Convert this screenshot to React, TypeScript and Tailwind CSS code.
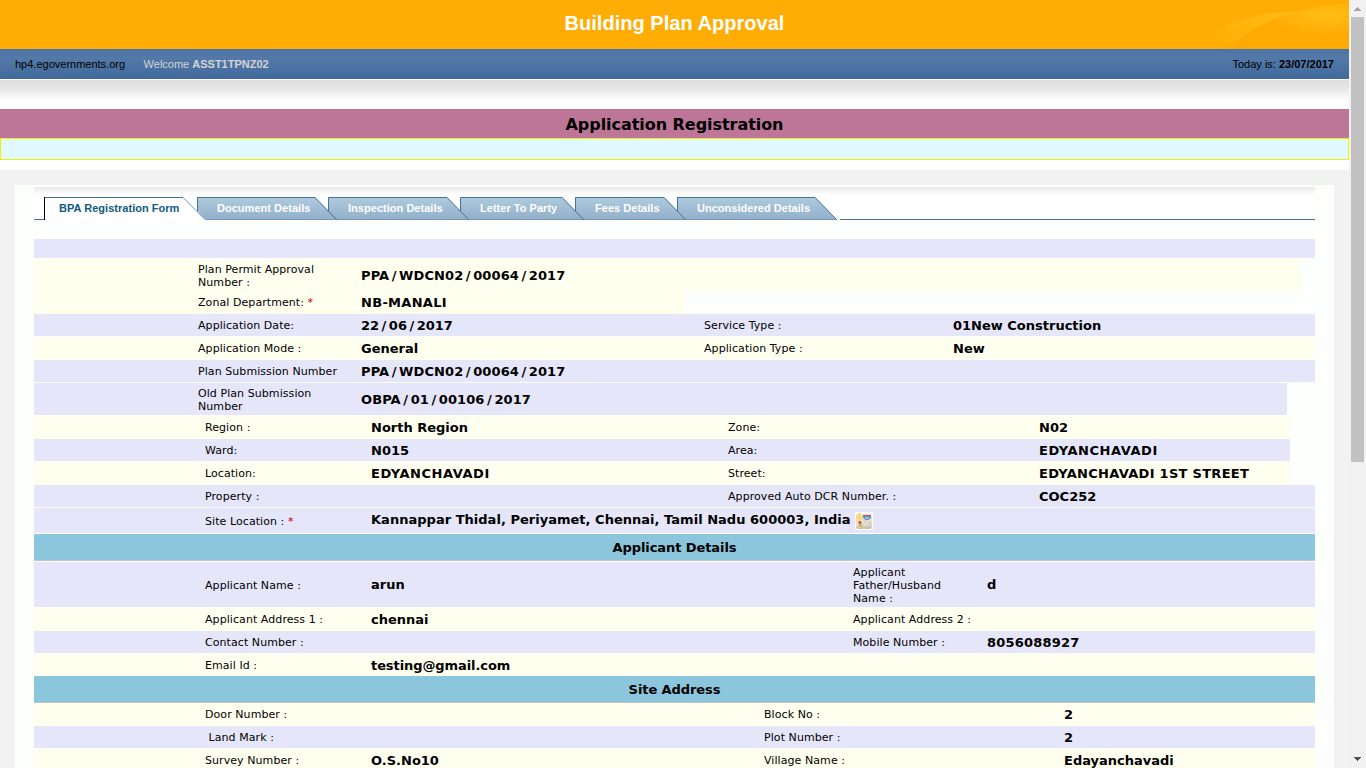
import React from "react";

type Row = {
  h: string;
  bg: string;
  cols: string;
  w?: string;
  cells: [string, string, string?, string?];
  required?: boolean;
  map?: boolean;
  nudge?: string;
  labelPad?: string;
  track?: string;
  track2?: string;
};

const LAV = "bg-[#e6e6fa] border-[#fcfffc]";
const IVORY = "bg-[#fffff0] border-[#fffff0]";
const A = "grid-cols-[164px_163px_343px_249px_1fr]";
const B = "grid-cols-[171px_166px_357px_311px_1fr]";
const C = "grid-cols-[171px_166px_482px_134px_1fr]";
const D = "grid-cols-[171px_166px_393px_300px_1fr]";

const planRows: Row[] = [
  { h: "h-[33px]", bg: IVORY, cols: A, w: "w-[1267px]", cells: ["Plan Permit Approval\nNumber :", "PPA/WDCN02/00064/2017"], nudge: "pt-[2px]", labelPad: "pt-[2px]", track: "tracking-[0.1px]" },
  { h: "h-[23px]", bg: IVORY, cols: A, w: "w-[651px]", cells: ["Zonal Department:", "NB-MANALI"], required: true, track: "tracking-[0.3px]" },
  { h: "h-[23px]", bg: LAV, cols: A, cells: ["Application Date:", "22/06/2017", "Service Type :", "01New Construction"] },
  { h: "h-[23px]", bg: IVORY, cols: A, cells: ["Application Mode :", "General", "Application Type :", "New"] },
  { h: "h-[23px]", bg: LAV, cols: A, cells: ["Plan Submission Number", "PPA/WDCN02/00064/2017"], track: "tracking-[0.1px]" },
  { h: "h-[33px]", bg: LAV, cols: A, w: "w-[1253px]", cells: ["Old Plan Submission\nNumber", "OBPA/01/00106/2017"], labelPad: "pt-[2px]", track: "tracking-[0.1px]" },
  { h: "h-[23px]", bg: IVORY, cols: B, w: "w-[1256px]", cells: ["Region :", "North Region", "Zone:", "N02"] },
  { h: "h-[23px]", bg: LAV, cols: B, w: "w-[1256px]", cells: ["Ward:", "N015", "Area:", "EDYANCHAVADI"], track2: "tracking-[0.54px]" },
  { h: "h-[23px]", bg: IVORY, cols: B, w: "w-[1256px]", cells: ["Location:", "EDYANCHAVADI", "Street:", "EDYANCHAVADI 1ST STREET"], track: "tracking-[0.54px]", track2: "tracking-[0.29px]" },
  { h: "h-[23px]", bg: LAV, cols: B, cells: ["Property :", "", "Approved Auto DCR Number. :", "COC252"] },
  { h: "h-[26px]", bg: LAV, cols: B, cells: ["Site Location :", "Kannappar Thidal, Periyamet, Chennai, Tamil Nadu 600003, India"], required: true, map: true, labelPad: "pt-px", track: "tracking-[0.02px]" },
];

const applicantRows: Row[] = [
  { h: "h-[46px]", bg: LAV, cols: C, cells: ["Applicant Name :", "arun", "Applicant\nFather/Husband\nName :", "d"], labelPad: "pt-[2px]" },
  { h: "h-[23px]", bg: IVORY, cols: C, cells: ["Applicant Address 1 :", "chennai", "Applicant Address 2 :", ""] },
  { h: "h-[23px]", bg: LAV, cols: C, cells: ["Contact Number :", "", "Mobile Number :", "8056088927"], track2: "tracking-[0.2px]" },
  { h: "h-[22px]", bg: IVORY, cols: C, cells: ["Email Id :", "testing@gmail.com"], nudge: "pt-px", track: "tracking-[-0.08px]" },
];

const siteRows: Row[] = [
  { h: "h-[23px]", bg: IVORY, cols: D, cells: ["Door Number :", "", "Block No :", "2"] },
  { h: "h-[23px]", bg: LAV, cols: D, cells: ["\u00a0Land Mark :", "", "Plot Number :", "2"] },
  { h: "h-[23px]", bg: IVORY, cols: D, cells: ["Survey Number :", "O.S.No10", "Village Name :", "Edayanchavadi"] },
];

function MapIcon() {
  return (
    <svg width="18" height="18" viewBox="0 0 18 18" className="ml-1 shrink-0">
      <rect width="18" height="18" fill="#fbfaf2" />
      <path d="M1 2h15l1 12-1 3H2l-1-3z" fill="#e6e2d3" />
      <path d="M1 14l1 3h14l1-3z" fill="#c9c4b2" />
      <path d="M9 8l7-1 1 7-9 1z" fill="#d9d5c5" />
      <path d="M4.5 1v15" stroke="#f6d95c" strokeWidth="2" />
      <path d="M1 5.5h16" stroke="#f6d95c" strokeWidth="2" />
      <path d="M9 14l5-6" stroke="#f7f5ec" />
      <path d="M8 3h8v2q-1 3-4 3t-4-3z" fill="#6487c8" />
      <path d="M8 3.5h8" stroke="#c8586c" />
      <path d="M10 6h4" stroke="#dbe4f5" />
      <circle cx="5" cy="10.5" r="1.5" fill="#d94438" />
      <path d="M5 12v3" stroke="#c9763d" />
      <path d="M6 13h2" stroke="#86b867" />
    </svg>
  );
}

function Label({ text, required, pad = "" }: { text?: string; required?: boolean; pad?: string }) {
  return (
    <div className={`whitespace-pre text-[11px] leading-[13px] tracking-[0.07px] ${pad}`}>
      {text}
      {required && <span className="text-[#c00000]"> *</span>}
    </div>
  );
}

function Value({ text = "", map, track = "" }: { text?: string; map?: boolean; track?: string }) {
  return (
    <div className={`flex items-center whitespace-pre text-[13px] font-bold leading-[15px] ${track}`}>
      <span className={map ? "pb-[2px]" : ""}>
        {text.split("/").map((part, i) => (
          <React.Fragment key={i}>
            {i > 0 && <span className="mx-[2.5px]">/</span>}
            {part}
          </React.Fragment>
        ))}
      </span>
      {map && <MapIcon />}
    </div>
  );
}

function DataRow({ row }: { row: Row }) {
  return (
    <div className={`grid shrink-0 items-center border-b ${row.h} ${row.bg} ${row.cols} ${row.w ?? "w-full"} ${row.nudge ?? ""}`}>
      <span />
      <Label text={row.cells[0]} required={row.required} pad={row.labelPad} />
      <Value text={row.cells[1]} map={row.map} track={row.track} />
      <Label text={row.cells[2]} pad={row.labelPad} />
      <Value text={row.cells[3]} track={row.track2} />
    </div>
  );
}

function SectionTitle({ children }: { children: React.ReactNode }) {
  return (
    <div className="flex h-[27px] items-center justify-center border-b border-[#c3c3c3] bg-[#8cc6dc] pt-[2px] text-[13px] font-bold tracking-[-0.08px]">
      {children}
    </div>
  );
}

const tabs = [
  { label: "Document Details", w: 140, step: "w-[131px] z-50" },
  { label: "Inspection Details", w: 141, step: "w-[132px] z-40" },
  { label: "Letter To Party", w: 124, step: "w-[115px] z-30" },
  { label: "Fees Details", w: 111, step: "w-[102px] z-20" },
  { label: "Unconsidered Details", w: 160, step: "w-[163px] z-10" },
];

function Tabs() {
  return (
    <div className="isolate flex h-[33px] items-end bg-linear-to-b from-[#ebebeb] to-white to-25% font-['Liberation_Sans',Arial,sans-serif] text-[11px] font-bold">
      <div className="h-[1px] w-[10px] bg-[#41719c]" />
      <div className="relative z-[60] flex h-[23px] w-[153px] items-center pl-[15px] tracking-[0.03px] text-[#0f5b80]">
        <svg className="absolute left-0 top-0 overflow-visible" width="162" height="23">
          <path d="M0.5 23V0.5H139L161.5 23H1" fill="#fff" />
          <path d="M0 0.5H139" stroke="#41719c" />
          <path d="M139 0.5L161.5 23" stroke="#6c98b6" fill="none" />
          <path d="M0.5 0V23" stroke="#000" />
        </svg>
        <span className="relative whitespace-nowrap">BPA Registration Form</span>
      </div>
      {tabs.map((t, i) => (
        <div key={t.label} className={`relative flex h-[23px] items-center pl-[20px] tracking-[0.03px] text-white ${t.step}`}>
          <svg className="absolute left-0 top-0 overflow-visible" width={t.w} height="23">
            <defs>
              <linearGradient id={`tab${i}`} x2="0" y2="1">
                <stop offset="0" stopColor="#afcbdd" />
                <stop offset="1" stopColor="#92afca" />
              </linearGradient>
            </defs>
            <path d={`M0 0H${t.w - 22}L${t.w} 23H9L0 14Z`} fill={`url(#tab${i})`} />
            <path d={`M9 22.5H${t.w}`} stroke="#7898b3" />
            <path d={`M0.5 14V0.5H${t.w - 22}L${t.w} 23`} fill="none" stroke="#41719c" />
          </svg>
          <span className="relative whitespace-nowrap">{t.label}</span>
        </div>
      ))}
      <div className="h-[1px] flex-1 bg-[#41719c]" />
    </div>
  );
}

function ScrollBar() {
  return (
    <div className="flex h-full w-[17px] flex-col items-center bg-[#f1f1f1]">
      <svg width="17" height="17" shapeRendering="crispEdges" className="shrink-0">
        <path d="M5 11h7v-1h-1v-1h-1v-1h-1v-1h-1v1h-1v1h-1v1h-1z" fill="#a3a3a3" />
      </svg>
      <div className="h-[445px] w-[13px] shrink-0 bg-[#c1c1c1]" />
      <div className="flex-1" />
      <svg width="17" height="17" shapeRendering="crispEdges" className="shrink-0">
        <path d="M5 6h7v1h-1v1h-1v1h-1v1h-1v-1h-1v-1h-1v-1h-1z" fill="#505050" />
      </svg>
    </div>
  );
}

export default function App() {
  return (
    <div className="flex h-[768px] w-[1366px] overflow-hidden bg-white font-['DejaVu_Sans',Verdana,sans-serif] text-black">
      <div className="flex w-[1349px] flex-col overflow-hidden">
        <header className="relative flex h-[49px] shrink-0 items-center justify-center bg-[#ffad04] pb-[3px] font-['Liberation_Sans',Arial,sans-serif] text-[20px] font-bold text-white">
          <svg className="absolute right-0 top-0" width="160" height="49">
            <defs>
              <linearGradient id="swoosh" x1="0" y1="1" x2="1" y2="0">
                <stop offset="0.1" stopColor="#ffb80e" stopOpacity="0" />
                <stop offset="1" stopColor="#ffbd18" />
              </linearGradient>
              <radialGradient id="glow" cx="0.8" cy="0.25" r="0.45">
                <stop offset="0" stopColor="#ffbf18" />
                <stop offset="1" stopColor="#ffaa02" />
              </radialGradient>
            </defs>
            <path d="M0 49Q50 10 107 12Q70 24 37 49Z" fill="url(#swoosh)" />
            <path d="M37 49Q88 6 160 4V49Z" fill="url(#glow)" />
          </svg>
          <h1 className="tracking-[0.03px]">Building Plan Approval</h1>
        </header>
        <div className="flex h-[30px] shrink-0 items-center bg-linear-to-b from-[#4b74a6] via-[#5479a8] via-30% to-[#40699c] px-[15px] font-['Liberation_Sans',Arial,sans-serif] text-[11px]">
          <span>hp4.egovernments.org</span>
          <span className="ml-[18.5px] text-[#d3d3d3]">Welcome <b>ASST1TPNZ02</b></span>
          <span className="ml-auto">Today is: <b>23/07/2017</b></span>
        </div>
        <div className="mt-px h-[29px] shrink-0 bg-linear-to-b from-[#dedede] via-[#e4e4e4] via-25% to-white to-70%" />
        <div className="flex h-[29px] shrink-0 items-center justify-center bg-[#bd7698] pt-[2px] text-[16px] font-bold">
          <h2 className="tracking-[-0.05px]">Application Registration</h2>
        </div>
        <div className="h-[22px] shrink-0 border border-[#f0f000] bg-[#e0f8ff]" />
        <main className="mt-[10px] flex-1 bg-[#f2f2f2] px-[15px] pt-[15px]">
          <div className="h-[583px] bg-[#fcfffc] px-[19px] pt-[2px]">
            <Tabs />
            <div className="mt-[19px] h-[19px] bg-[#e6e6fa]" />
            {planRows.map((r, i) => <DataRow key={i} row={r} />)}
            <SectionTitle>Applicant Details</SectionTitle>
            <div className="h-px" />
            {applicantRows.map((r, i) => <DataRow key={i} row={r} />)}
            <SectionTitle>Site Address</SectionTitle>
            {siteRows.map((r, i) => <DataRow key={i} row={r} />)}
          </div>
        </main>
      </div>
      <ScrollBar />
    </div>
  );
}
